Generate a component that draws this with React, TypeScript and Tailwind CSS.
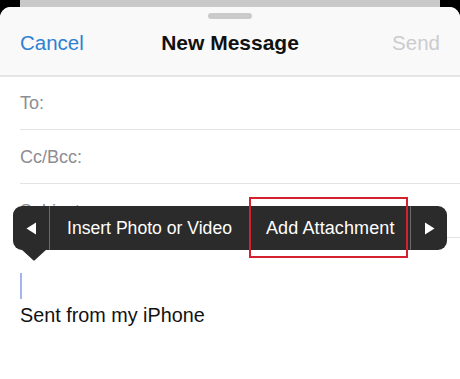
import React from "react";

export default function App() {
  const font = { fontFamily: '"Liberation Sans", Arial, sans-serif' };
  return (
    <div className="relative w-[460px] h-[379px] bg-black overflow-hidden flex flex-col" style={font}>
      <div className="mx-[20px] h-[7px] bg-[#c9c9c9] shrink-0" />
      <div className="flex-1 bg-white rounded-t-[11px] flex flex-col overflow-hidden">
        <div className="bg-[#f9f9f9] h-[70px] border-b-2 border-[#e5e5e5] shrink-0 flex flex-col">
          <div className="pt-[6px] flex justify-center">
            <div className="w-[44px] h-[6px] rounded-full bg-[#cacaca]" />
          </div>
          <div className="relative flex items-center justify-between px-[20px] mt-[11px] h-[26px]">
            <span className="text-[20.5px] text-[#2f80d3]">Cancel</span>
            <span className="absolute left-0 right-0 text-center text-[21px] font-bold text-[#111] pointer-events-none">New Message</span>
            <span className="text-[20.5px] text-[#cbcbcf]">Send</span>
          </div>
        </div>
        <div className="pl-[20px]">
          <div className="h-[53px] border-b border-[#e3e3e6] flex items-center text-[18px] text-[#8d8d92] pt-[1px]">To:</div>
          <div className="h-[54px] border-b border-[#e3e3e6] flex items-center text-[18px] text-[#8d8d92] pt-[1px]">Cc/Bcc:</div>
          <div className="h-[54px] border-b border-[#e3e3e6] flex items-center text-[18px] text-[#8d8d92] pt-[1px]">Subject:</div>
        </div>
        <div className="pl-[20px] pt-[35px] flex flex-col">
          <div className="w-[2px] h-[26px] bg-[#a5b4ec]" />
          <div className="mt-[4px] text-[19.8px] text-[#111] leading-[24px]">Sent from my iPhone</div>
        </div>
      </div>

      {/* popup menu */}
      <div className="absolute left-[13px] top-[206px] w-[434px] h-[44px] rounded-[9px] bg-[#2b2b2b] flex items-stretch text-white">
        <div className="w-[36px] flex items-center justify-center">
          <svg width="11" height="13" viewBox="0 0 11 13"><path d="M10 0.5 L10 12.5 L0.5 6.5 Z" fill="#fff" /></svg>
        </div>
        <div className="w-px bg-[#6a6a6a]" />
        <div className="w-[199px] flex items-center pl-[17px] text-[17.6px]">Insert Photo or Video</div>
        <div className="w-[161px] flex items-center pl-[17px] text-[18px] tracking-[0.1px]">Add Attachment</div>
        <div className="w-px bg-[#6a6a6a]" />
        <div className="flex-1 flex items-center justify-center">
          <svg width="11" height="13" viewBox="0 0 11 13"><path d="M1 0.5 L1 12.5 L10.5 6.5 Z" fill="#fff" /></svg>
        </div>
      </div>
      <svg className="absolute left-[21px] top-[249px]" width="26" height="12" viewBox="0 0 26 12">
        <path d="M0 0 L26 0 L14 11 Q13 12 12 11 Z" fill="#2b2b2b" />
      </svg>
      <div className="absolute left-[249px] top-[197px] w-[159px] h-[61px] border-2 border-[#d3212d]" />
    </div>
  );
}
